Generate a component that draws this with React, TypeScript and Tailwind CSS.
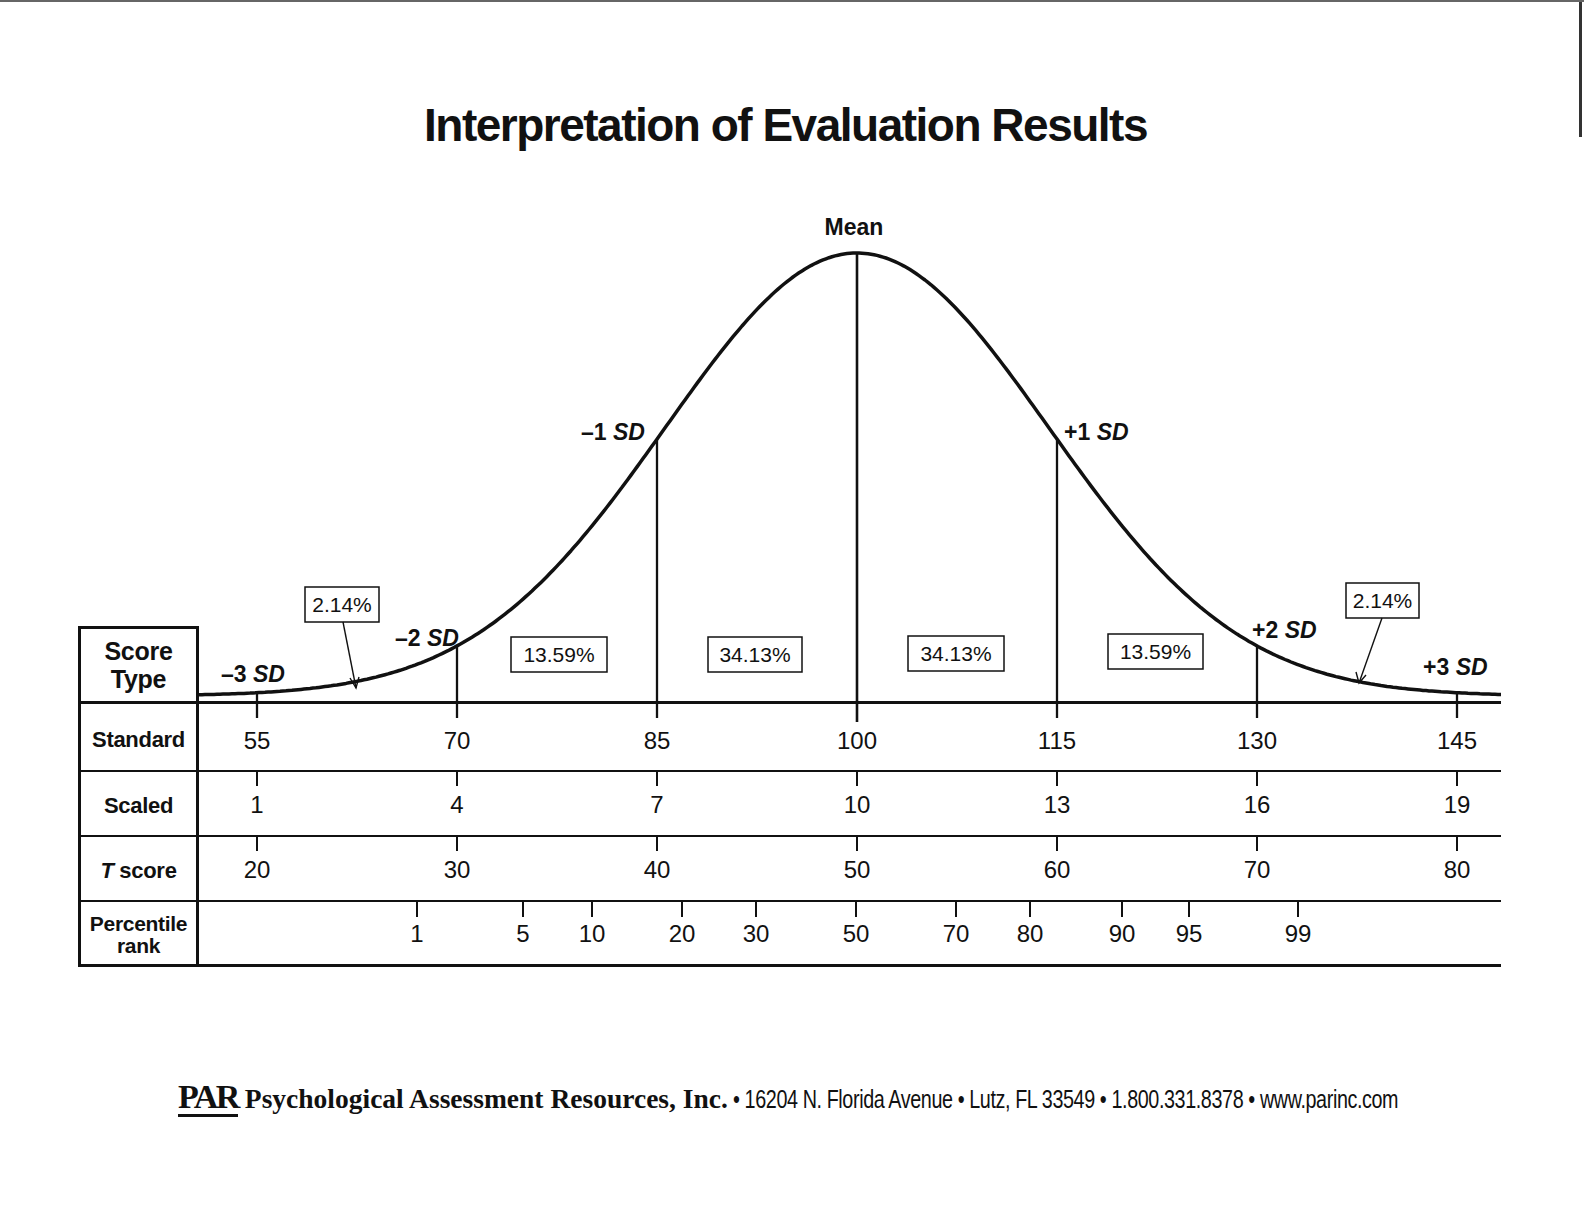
import React from 'react';

// x positions of the standard-score ticks (55 ... 145), one SD = 200px
const SD_X = [257, 457, 657, 857, 1057, 1257, 1457];

const curveY = (x: number) => {
    const z = (x - 857) / 200;
    return 702 - (443 * Math.exp(-0.545 * z * z) + 6);
};

function curvePath() {
    const pts: string[] = [];
    for (let x = 199; x < 1501; x += 3) pts.push(`${x},${curveY(x).toFixed(1)}`);
    pts.push(`1501,${curveY(1501).toFixed(1)}`);
    return 'M' + pts.join(' L');
}

const standard = ['55', '70', '85', '100', '115', '130', '145'];
const scaled = ['1', '4', '7', '10', '13', '16', '19'];
const tScore = ['20', '30', '40', '50', '60', '70', '80'];
const percentiles: [string, number][] = [
    ['1', 417],
    ['5', 523],
    ['10', 592],
    ['20', 682],
    ['30', 756],
    ['50', 856],
    ['70', 956],
    ['80', 1030],
    ['90', 1122],
    ['95', 1189],
    ['99', 1298],
];

const boxes = [
    { label: '2.14%', x: 305, y: 587, w: 74 },
    { label: '13.59%', x: 511, y: 637, w: 96 },
    { label: '34.13%', x: 708, y: 637, w: 94 },
    { label: '34.13%', x: 908, y: 636, w: 96 },
    { label: '13.59%', x: 1108, y: 634, w: 95 },
    { label: '2.14%', x: 1346, y: 583, w: 73 },
];

const sdLabels = [
    { sign: '–3', x: 221, y: 682 },
    { sign: '–2', x: 395, y: 646 },
    { sign: '–1', x: 581, y: 440 },
    { sign: '+1', x: 1064, y: 440 },
    { sign: '+2', x: 1252, y: 638 },
    { sign: '+3', x: 1423, y: 675 },
];

function Chart() {
    const ink = '#111';
    return (
        <svg width={1302} height={767} viewBox="199 200 1302 767" className="block shrink-0">
            {/* table lines */}
            <line x1={199} y1={702.5} x2={1501} y2={702.5} stroke={ink} strokeWidth={3} />
            <line x1={199} y1={771} x2={1501} y2={771} stroke={ink} strokeWidth={2} />
            <line x1={199} y1={836} x2={1501} y2={836} stroke={ink} strokeWidth={2} />
            <line x1={199} y1={901} x2={1501} y2={901} stroke={ink} strokeWidth={2} />
            <line x1={199} y1={965.5} x2={1501} y2={965.5} stroke={ink} strokeWidth={3} />

            {/* bell curve */}
            <path d={curvePath()} fill="none" stroke={ink} strokeWidth={3.5} strokeLinejoin="round" />

            {/* SD verticals */}
            {SD_X.map((x) => (
                <line
                    key={`sd-${x}`}
                    x1={x}
                    y1={curveY(x)}
                    x2={x}
                    y2={x === 857 ? 722 : 718}
                    stroke={ink}
                    strokeWidth={x === 857 ? 2.6 : 2.3}
                />
            ))}

            {/* row ticks */}
            {SD_X.map((x) => (
                <g key={`tk-${x}`} stroke={ink} strokeWidth={2}>
                    <line x1={x} y1={771} x2={x} y2={786} />
                    <line x1={x} y1={836} x2={x} y2={851} />
                </g>
            ))}
            {percentiles.map(([, x]) => (
                <line key={`pt-${x}`} x1={x} y1={901} x2={x} y2={917} stroke={ink} strokeWidth={2} />
            ))}

            {/* row values */}
            <g fill={ink} fontSize={24} textAnchor="middle">
                {standard.map((v, i) => (
                    <text key={`st-${v}`} x={SD_X[i]} y={749}>
                        {v}
                    </text>
                ))}
                {scaled.map((v, i) => (
                    <text key={`sc-${v}`} x={SD_X[i]} y={813}>
                        {v}
                    </text>
                ))}
                {tScore.map((v, i) => (
                    <text key={`t-${v}`} x={SD_X[i]} y={878}>
                        {v}
                    </text>
                ))}
                {percentiles.map(([v, x]) => (
                    <text key={`p-${v}`} x={x} y={942}>
                        {v}
                    </text>
                ))}
            </g>

            {/* percentage boxes */}
            {boxes.map((b, i) => (
                <g key={`bx-${i}`}>
                    <rect x={b.x} y={b.y} width={b.w} height={35} fill="white" stroke={ink} strokeWidth={1.5} />
                    <text x={b.x + b.w / 2} y={b.y + 25} fontSize={21} textAnchor="middle" fill={ink}>
                        {b.label}
                    </text>
                </g>
            ))}

            {/* arrows from the 2.14% boxes */}
            <g stroke={ink} strokeWidth={1.4} fill="none">
                <line x1={343} y1={622} x2={356} y2={688} />
                <polyline points="350,678 356,688 359,677" />
                <line x1={1382} y1={618} x2={1359} y2={683} />
                <polyline points="1356,672 1359,683 1366,675" />
            </g>

            {/* labels */}
            <text x={854} y={235} fontSize={23} fontWeight="bold" textAnchor="middle" fill={ink}>
                Mean
            </text>
            {sdLabels.map((l) => (
                <text key={l.sign} x={l.x} y={l.y} fontSize={23} fontWeight="bold" fill={ink}>
                    {l.sign} <tspan fontStyle="italic">SD</tspan>
                </text>
            ))}
        </svg>
    );
}

export default function App() {
    return (
        <div className="w-[1584px] h-[1224px] bg-white overflow-hidden border-t-2 border-[#666] font-['Liberation_Sans',Arial,sans-serif] text-[#111]">
            <div className="flex">
                <div className="flex-1 pt-[100px] pr-[8px] text-center">
                    <h1 className="text-[46px] leading-none font-bold tracking-[-1.5px]">
                        Interpretation of Evaluation Results
                    </h1>
                </div>
                <div className="w-[3px] h-[135px] mr-[2px] bg-[#333]" />
            </div>

            <div className="mt-[52px] flex items-end pl-[78px]">
                <div className="w-[121px] border-[3px] border-[#111] flex flex-col font-bold text-center">
                    <div className="h-[75px] border-b-[3px] border-[#111] flex flex-col items-center justify-center text-[25px] leading-[28px] tracking-[-0.3px]">
                        <span>Score</span>
                        <span>Type</span>
                    </div>
                    <div className="h-[68px] pt-[4px] border-b-2 border-[#111] flex items-center justify-center text-[22px] tracking-[-0.3px]">
                        Standard
                    </div>
                    <div className="h-[65px] pt-[4px] border-b-2 border-[#111] flex items-center justify-center text-[22px] tracking-[-0.3px]">
                        Scaled
                    </div>
                    <div className="h-[65px] pt-[4px] border-b-2 border-[#111] flex items-center justify-center text-[22px] tracking-[-0.3px]">
                        <span>
                            <i>T</i> score
                        </span>
                    </div>
                    <div className="h-[62px] pt-[4px] flex flex-col items-center justify-center text-[21px] leading-[22px] tracking-[-0.3px]">
                        <span>Percentile</span>
                        <span>rank</span>
                    </div>
                </div>
                <Chart />
            </div>

            <div className="mt-[113px] pl-[178px] flex items-baseline whitespace-nowrap">
                <span className="font-['Liberation_Serif',serif] font-black text-[34px] leading-none tracking-[-2.5px] border-b-[3px] border-[#111]">
                    PAR
                </span>
                <span className="ml-[7px] font-['Liberation_Serif',serif] font-bold text-[27.5px] leading-none">
                    Psychological Assessment Resources, Inc.
                </span>
                <span className="ml-[5px] inline-block origin-left scale-x-[0.79] text-[25px] leading-none tracking-[-0.5px]">
                    • 16204 N. Florida Avenue • Lutz, FL 33549 • 1.800.331.8378 • www.parinc.com
                </span>
            </div>
        </div>
    );
}
